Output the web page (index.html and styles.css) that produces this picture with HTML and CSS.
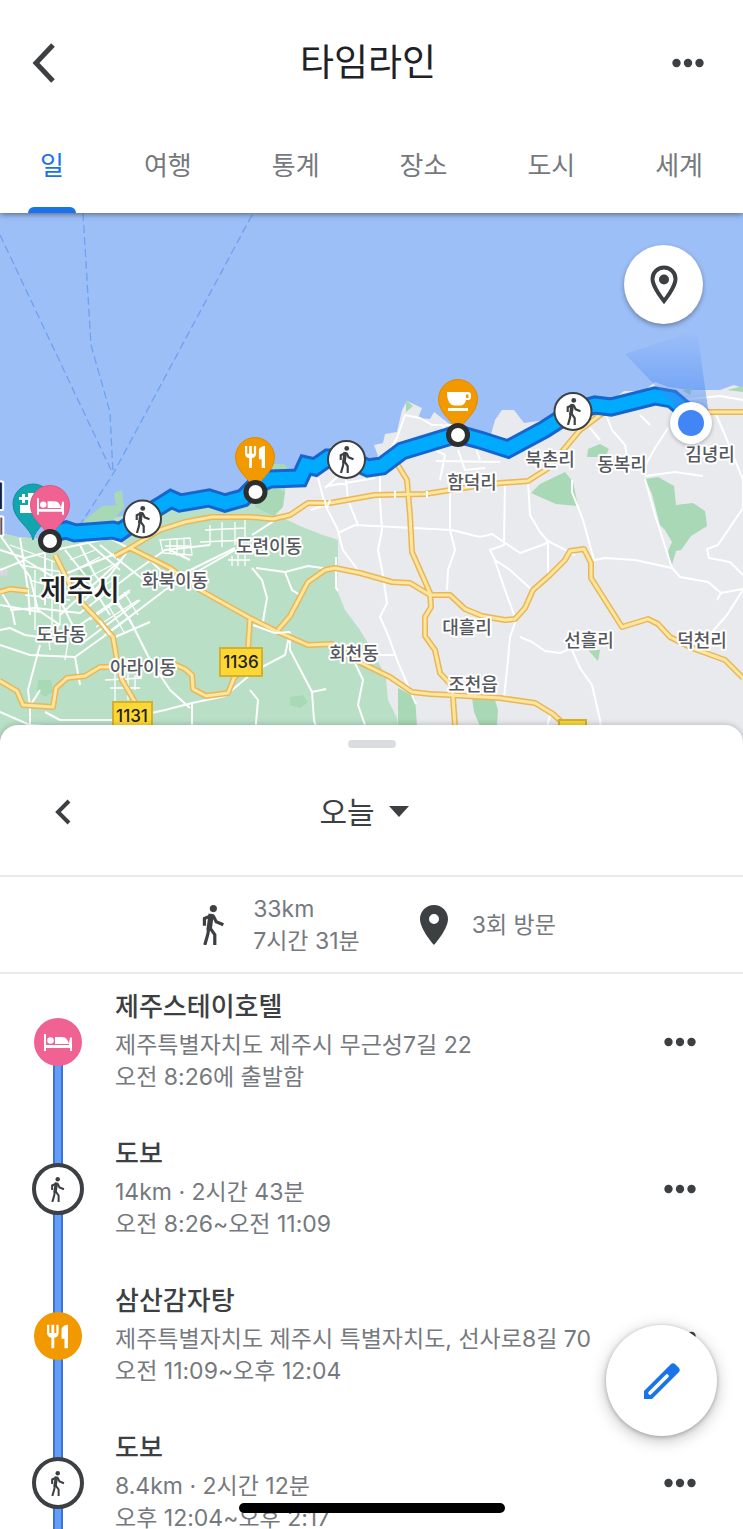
FILE: index.html
```html
<!DOCTYPE html>
<html lang="ko">
<head>
<meta charset="utf-8">
<meta name="viewport" content="width=device-width, initial-scale=1">
<title>타임라인</title>
<link rel="stylesheet" href="styles.css">
</head>
<body>
<svg class="defs" aria-hidden="true">
  <symbol id="walk" viewBox="0 0 62 112"><circle cx="32" cy="10" r="10" stroke="none"/><g fill="none" stroke="#3c4043" stroke-width="9"><path d="M27 29L7 38V58M31 29L40 47L60 55M19 60L17 80L8 112M21 62L36 83V112"/><path stroke-width="15" d="M26 25L20 70"/></g></symbol>
  <symbol id="food" viewBox="3 2 18 20"><path d="M11 9H9.200V2H6.800v7H5V2H3v7c0 2.120 1.660 3.840 3.750 3.970V22h2.500v-9.030C11.340 12.840 13 11.120 13 9V2h-2zM15.500 6v8h2.500v8h3V2c-3 0-5.500 2-5.500 4z"/></symbol>
  <symbol id="bed" viewBox="0 0 28 17"><path d="M0 0h2v11h23V9l1-5.500h2V17h-2v-3H2v3H0zM11 10V3h7c4 0 6 3 7 7z"/><circle cx="6.500" cy="6.500" r="3.300"/></symbol>
  <symbol id="cup" viewBox="0 0 24 19"><path fill-rule="evenodd" d="M0 0h21c2 0 3 1 3 3v2c0 2-1 3-3 3h-2c-1 4-3 5.500-6 5.500H8C3 13.500 0 9 0 0zM19 2.500v3.500h2.500V2.500zM1 16h20v3H1z"/></symbol>
  <symbol id="dots" viewBox="0 0 32 10"><circle cx="4.500" cy="5" r="4.200"/><circle cx="16" cy="5" r="4.200"/><circle cx="27.500" cy="5" r="4.200"/></symbol>
</svg>

<div class="app">
  <header class="topbar">
    <button class="icon-btn" aria-label="뒤로"><svg class="back" viewBox="0 0 24 40"><path d="M21 2L4 20l17 18"/></svg></button>
    <h1 class="title">타임라인</h1>
    <button class="icon-btn icon-btn-end" aria-label="더보기"><svg class="dots"><use href="#dots"/></svg></button>
  </header>
  <nav class="tabs">
    <a class="tab tab-active" href="#day" aria-current="page">일</a>
    <a class="tab" href="#trips">여행</a>
    <a class="tab" href="#stats">통계</a>
    <a class="tab" href="#places">장소</a>
    <a class="tab" href="#cities">도시</a>
    <a class="tab" href="#world">세계</a>
  </nav>

  <section class="map" aria-label="지도">
    <svg class="map-art" viewBox="0 213 743 527" preserveAspectRatio="xMidYMin slice">
      <defs>
        <linearGradient id="beam" x1="0" y1="1" x2="0" y2="0"><stop offset="0" stop-color="#4285f4" stop-opacity=".65"/><stop offset="1" stop-color="#4285f4" stop-opacity="0"/></linearGradient>
        <path id="yellow" d="M115 556L130 548L160 530L185 522L212 517L250 517L273 519L290 515L308 503L330 503L375 495L425 494L470 487L500 483L528 481L547 469L565 448L580 430L604 412M705 412H743M130 548L170 568L200 590L250 618L276 631L308 645L332 644L355 660L390 677L412 692L430 694L450 695L500 698L535 703L553 714L566 726M396 462L407 480L410 515L412 552L430 593L431 607L425 617L425 636L435 650L440 673L453 687L453 697L456 740M278 630L290 616L308 582L325 570L335 568L360 573L392 582L410 583L430 595L450 595L465 609L482 616L505 620L515 619L525 608L533 590L550 575L565 560L570 551L584 549L591 563L591 578L622 627L648 619L658 624L670 637L692 648L725 660L743 678M55 555L70 585L83 604L100 622L113 637L117 660L122 680L135 702M0 681L17 691L23 705L53 707L56 688L67 678L85 676L100 667L115 667M165 660L185 669L192 675L193 689L206 696L228 693L234 678L245 668L248 650L250 618M0 592L10 589L28 591"/>
        <path id="route" d="M50 534L66 530L75 533L113 530L120 532L140 518L160 506L171 499L180 503L209 498L225 503L243 498L256 485L270 479L300 478L306 465L315 467L328 458L346 458L368 468L382 466L402 451L458 434L480 440L508 449L545 429L573 411L595 405L611 407L655 396L672 399L691 415"/>
      </defs>
      <path fill="#9dbff8" d="M0 213h743v527H0z"/>
      <path fill="#e8eaed" d="M0 533L18 537L50 540L84 524L143 512L172 499L210 495L250 490L276 467L300 478L330 463L368 468L378 456L374 445L383 443L385 434L397 432L402 410L407 401L422 408L418 418L430 419L434 412L452 426L490 438L495 420L502 410L514 410L524 423L545 420L573 403L615 398L624 391L644 391L655 382L668 387L690 390L720 390L734 385L743 388V740H0z"/>
      <path fill="#b9e0c6" d="M0 533L18 537L50 540L84 524L143 512L172 499L210 495L250 490L276 467L290 469L283 500L275 514L300 526L320 534L338 540L338 562L337 590L345 610L360 630L376 657L386 678L388 700L397 718L400 740H0z"/>
      <path fill="#a8d8b5" d="M80 524L102 506L116 505L114 493L122 490L124 508L110 523zM255 495L275 487L285 492L283 507L274 516L255 507zM264 474L274 464H284L290 470zM406 400L413 406L406 412zM531 493L540 484L565 472L573 482L578 506L556 504zM645 479L658 477L674 486L676 505L693 503L705 511L707 526L691 536L681 550L676 551L671 568L668 551L672 542L665 530L660 525L652 494zM588 449L600 444L609 449L605 457H587zM588 650L600 650L598 661zM398 688L415 697L418 740H398zM472 697H494L498 710L496 740H486L474 712zM38 680L51 680L53 692L45 697L37 691zM290 697L303 695L308 702L300 708L290 705zM77 567L88 566L92 576H78zM682 390L692 388L690 395zM727 390L743 386V392z"/>
      <path fill="#d5d8dd" d="M0 567L8 570L7 577L0 575z"/>
      <g fill="none" stroke="#70a0f0" stroke-width="1.300" stroke-dasharray="8 4"><path d="M0 235L113 474"/><path d="M83 213L91 345L110 412L113 474"/><path d="M252 215L113 474L80 525"/></g>
      <g class="streets">
        <path d="M0 550L25 558L55 550L110 538L150 560L170 580L235 548M0 570L25 560L55 578L100 560L130 548L110 575L80 605M0 535L30 577L38 610L60 625M10 610L35 608L80 613L130 575L165 550L210 545M0 645L30 655L75 657L110 632L165 590L235 550M80 545L95 575L130 620L150 660L170 690L190 708M40 690L30 706L30 740M30 706L28 690L40 645M75 657L80 685M115 637L150 622M60 615L115 565L122 560M70 632L130 590M80 645L140 600M20 538L28 590L30 615M45 545V605M65 550L85 575L110 615M0 605L40 612M0 630L10 628L25 635L60 640M60 600L80 640M0 712L30 725L75 728L98 738M45 712L60 720L120 720L165 710L192 703L225 696L250 675M192 703V740M85 540L120 570M100 545L150 585M15 625L12 610L0 590"/>
        <path stroke-width="1.300" d="M160 540L190 538L192 555L163 553zM165 546H190M170 539V554M177 538V556M184 538V555M205 530L245 528M200 542L250 540M210 525V545M222 522V547M235 522V545M245 520V540M90 620L130 592M96 627L138 600M104 635L144 606M108 605L124 632M116 598L132 625M124 592L138 615M10 545L55 562M20 565L62 572M30 580L65 590M25 595L70 600M35 570V630M52 560V625M60 565V625M70 560L95 550M75 570L100 557M80 582L112 565M90 595L120 575M50 650L48 632L60 625M65 660L68 642M105 680L142 678M110 688H140M115 670V705M128 670V700M135 675V690M228 560H250M232 556V566M238 555V566M245 555V566"/>
        <path d="M252 535L280 517M252 568L262 580L267 598L264 615L262 628M256 568L285 572L308 566L330 569M285 572L292 590L303 597M336 557V588L338 591M318 478L325 505L337 528L343 550L360 573M325 488L345 470M325 505L311 510M328 486L375 478M346 480L348 500L358 525M380 470V500L382 530L378 550L383 575L387 603L380 617L388 635L397 660L412 695L416 704M338 533L355 525L452 530L480 537L492 534L520 553L545 544L548 541L575 555M450 480V530L455 550L448 570L447 590M505 480L504 545L490 550L495 560L510 570L532 590M493 555L505 590L516 620L510 637L508 660L504 698M572 480V492L583 520L594 560L605 558L635 560L672 568L680 577L708 582L721 593L743 589M721 593L717 600M528 481L530 515L540 532L548 541V573M606 415L612 430L625 445L630 470M590 428L600 440M645 479L655 515L672 568M645 476L675 472L703 476M668 428L655 448L643 470M715 412L725 435L735 460L743 480V508L718 545L707 549L709 558L730 562L743 575M743 590L727 615L712 632M572 648L560 653L545 651L532 642L520 637M572 650L580 668L592 685L600 720L602 740M250 690L258 700L255 735M290 632L285 655L262 667M290 635V650L312 692L314 720L320 740M312 692L326 689M355 663L363 680L358 705L365 725M395 655H380M430 447L445 455L440 480M458 450L465 470L485 468M475 445L480 460M436 461L500 462M405 460L390 450L397 438L405 415L420 418L432 425L455 425M430 450L445 425M640 415L650 425M680 400L720 396L743 400M550 715L545 735"/>
      </g>
      <use href="#yellow" class="road-edge"/>
      <use href="#yellow" class="road-fill"/>
      <path fill="none" stroke="#fff" stroke-width="2" d="M253 625L275 633L290 632M190 560L170 550M100 621L110 635M395 491v7M427 491v7M325 500l1 8M330 500l-3 8"/>
      <g class="place">
        <text x="472" y="489">함덕리</text><text x="550" y="466">북촌리</text><text x="622" y="471">동복리</text><text x="710" y="461">김녕리</text>
        <text x="269" y="553">도련이동</text><text x="175" y="587">화북이동</text><text x="61" y="641">도남동</text><text x="143" y="674">아라이동</text>
        <text x="354" y="660">회천동</text><text x="467" y="634">대흘리</text><text x="473" y="691">조천읍</text><text x="589" y="647">선흘리</text><text x="702" y="647">덕천리</text>
        <text x="-4" y="533">리</text>
      </g>
      <g class="place city"><text x="80" y="601">제주시</text><text x="-8" y="507">시</text></g>
      <g class="shield"><rect x="220" y="648" width="42" height="28"/><text x="241" y="668">1136</text><rect x="113" y="702" width="39" height="28"/><text x="132" y="722">1131</text><rect x="559" y="720" width="27" height="20"/></g>
      <use href="#route" class="route-edge"/>
      <use href="#route" class="route-fill"/>
      <path fill="url(#beam)" d="M691 423L625 354L697 330L710 423z"/>
      <path fill="#12a4af" stroke="#0e929c" d="M33 540C31 527 13 520 13 504a20 20 0 0140 0C53 520 35 527 33 540z"/>
      <path fill="#fff" d="M22 494h3v3h3v3h-3v3h-3v-3h-3v-3h3zM28 493h10v20H20v-8h8z"/>
      <path fill="#f06292" stroke="#e05584" d="M50 540C48 528 30.500 521 30.500 505a19.500 19.500 0 0139 0C69.500 521 52 528 50 540z"/>
      <use href="#bed" x="37" y="498" width="27" height="17" fill="#fff"/>
      <path id="pin" fill="#f29900" stroke="#df8b00" d="M255 492C253 480 235.500 473 235.500 457a19.500 19.500 0 0139 0C274.500 473 257 480 255 492z"/>
      <use href="#food" x="245" y="445" width="20" height="24" fill="#fff"/>
      <use href="#pin" x="203" y="-58"/>
      <use href="#cup" x="447" y="392" width="24" height="19" fill="#fff"/>
      <g class="stop"><circle cx="50" cy="541" r="9.500"/><circle cx="255.500" cy="492" r="9.500"/><circle cx="458" cy="435" r="9.500"/></g>
      <g class="leg"><circle cx="142.500" cy="519" r="18.500"/><circle cx="346.500" cy="459.500" r="18.500"/><circle cx="573" cy="411.500" r="18.500"/></g>
      <g fill="#3c4043"><use href="#walk" x="134" y="506" width="17" height="27"/><use href="#walk" x="338" y="446" width="17" height="27"/><use href="#walk" x="565" y="398" width="17" height="27"/></g>
      <circle class="here" cx="691" cy="423" r="21"/><circle cx="691" cy="423" r="13" fill="#4285f4"/>
    </svg>
    <button class="locate" aria-label="내 위치"><svg viewBox="0 0 28 40"><path d="M14 2.500C7.500 2.500 2.500 7.500 2.500 14c0 8 11.500 22 11.500 22s11.500-14 11.500-22c0-6.500-5-11.500-11.500-11.500z"/><circle cx="14" cy="14.500" r="5"/></svg></button>
  </section>

  <main class="sheet">
    <div class="handle"></div>
    <div class="day-nav">
      <button class="icon-btn" aria-label="이전 날짜"><svg class="prev" viewBox="0 0 16 26"><path d="M14 2L3 13l11 11"/></svg></button>
      <button class="today">오늘<svg class="caret" viewBox="0 0 20 11"><path d="M0 0h20L10 11z"/></svg></button>
    </div>
    <div class="summary">
      <svg class="sum-walk"><use href="#walk"/></svg>
      <p class="sum-text">33km<br>7시간 31분</p>
      <svg class="sum-pin" viewBox="5 2 14 20"><path fill-rule="evenodd" d="M12 2C8.130 2 5 5.130 5 9c0 5.250 7 13 7 13s7-7.750 7-13c0-3.870-3.130-7-7-7zm0 9.500a2.500 2.500 0 110-5 2.500 2.500 0 010 5z"/></svg>
      <p class="sum-text">3회 방문</p>
    </div>
    <ul class="timeline">
      <li class="entry">
        <div class="marker"><span class="badge badge-hotel"><svg class="i-bed"><use href="#bed"/></svg></span></div>
        <div class="info"><h2 class="name">제주스테이호텔</h2><p>제주특별자치도 제주시 무근성7길 22</p><p>오전 8:26에 출발함</p></div>
        <button class="more" aria-label="더보기"><svg class="dots"><use href="#dots"/></svg></button>
      </li>
      <li class="entry">
        <div class="marker"><span class="badge badge-walk"><svg class="i-walk"><use href="#walk"/></svg></span></div>
        <div class="info"><h2 class="name">도보</h2><p>14km · 2시간 43분</p><p>오전 8:26~오전 11:09</p></div>
        <button class="more" aria-label="더보기"><svg class="dots"><use href="#dots"/></svg></button>
      </li>
      <li class="entry">
        <div class="marker"><span class="badge badge-food"><svg class="i-food"><use href="#food"/></svg></span></div>
        <div class="info"><h2 class="name">삼산감자탕</h2><p>제주특별자치도 제주시 특별자치도, 선사로8길 70</p><p>오전 11:09~오후 12:04</p></div>
        <button class="more" aria-label="더보기"><svg class="dots"><use href="#dots"/></svg></button>
      </li>
      <li class="entry">
        <div class="marker"><span class="badge badge-walk"><svg class="i-walk"><use href="#walk"/></svg></span></div>
        <div class="info"><h2 class="name">도보</h2><p>8.4km · 2시간 12분</p><p>오후 12:04~오후 2:17</p></div>
        <button class="more" aria-label="더보기"><svg class="dots"><use href="#dots"/></svg></button>
      </li>
    </ul>
  </main>
  <button class="fab" aria-label="수정"><svg viewBox="0 0 36 36"><path fill="#1a73e8" d="M0 36v-8L26.500 1.500q2.500-2.500 5 0l3 3q2.500 2.500 0 5L8 36z"/><path fill="none" stroke="#fff" stroke-width="3.600" stroke-linecap="round" d="M6 30L23 13"/></svg></button>
  <div class="home-bar"></div>
</div>
</body>
</html>
```
FILE: styles.css
```css
* { box-sizing: border-box; }
body {
  margin: 0;
  background: #fff;
  color: #3c4043;
  font-family: Inter, "Noto Sans CJK KR", sans-serif;
}
h1, h2, p, ul { margin: 0; padding: 0; font-weight: 400; list-style: none; }
button { border: 0; padding: 0; background: none; color: inherit; font: inherit; cursor: pointer; }
svg { display: block; fill: #3c4043; }
.defs { position: absolute; width: 0; height: 0; }
.app {
  position: relative;
  display: flex;
  flex-direction: column;
  height: 100vh;
  overflow: hidden;
}

.topbar {
  position: relative;
  z-index: 2;
  display: grid;
  grid-template-columns: 1fr auto 1fr;
  align-items: center;
  height: 125px;
  padding: 0 39px 0 32px;
  flex: none;
  background: #fff;
}
.icon-btn { justify-self: start; }
.icon-btn-end { justify-self: end; }
.title { color: #202124; font-size: 37px; line-height: 48px; }
.back { width: 24px; height: 40px; fill: none; stroke: #3c4043; stroke-width: 5; }
.prev { width: 16px; height: 26px; fill: none; stroke: #3c4043; stroke-width: 4; }
.dots { width: 32px; height: 10px; }

.tabs {
  position: relative;
  z-index: 1;
  display: flex;
  flex: none;
  height: 88px;
  background: #fff;
  box-shadow: 0 1px 6px rgba(0, 0, 0, .5);
}
.tab {
  position: relative;
  flex: 1 1 auto;
  padding: 0 39px;
  color: #75797e;
  font-size: 26px;
  line-height: 82px;
  text-align: center;
  text-decoration: none;
  white-space: nowrap;
}
.tab-active { color: #1a73e8; }
.tab-active::after {
  content: "";
  position: absolute;
  right: 28px;
  bottom: 0;
  left: 28px;
  height: 6px;
  border-radius: 6px 6px 0 0;
  background: #1a73e8;
}

.map { position: relative; flex: none; }
.map-art { width: 100%; height: auto; }
.streets { fill: none; stroke: #fff; stroke-width: 2; stroke-linejoin: round; }
.road-edge, .road-fill { fill: none; stroke: #e9b659; stroke-width: 6; stroke-linejoin: round; }
.road-fill { stroke: #fee69c; stroke-width: 3; }
.route-edge, .route-fill { fill: none; stroke: #1765cc; stroke-width: 19; stroke-linejoin: miter; }
.route-fill { stroke: #00aaff; stroke-width: 13; }
.place {
  fill: #55595e;
  stroke: #fff;
  stroke-width: 4px;
  stroke-linejoin: round;
  paint-order: stroke;
  font-size: 18px;
  font-weight: 500;
  text-anchor: middle;
}
.city { fill: #202124; font-size: 29px; }
.shield rect { fill: #fdd835; stroke: #d5b02c; stroke-width: 2px; }
.shield text { fill: #202124; font-size: 17px; font-weight: 500; text-anchor: middle; }
.stop { fill: #fff; stroke: #2d2e30; stroke-width: 5px; }
.leg { fill: #fff; stroke: #3c4043; stroke-width: 2px; }
.here { fill: #fff; filter: drop-shadow(0 1px 2px rgba(0, 0, 0, .3)); }
.locate {
  position: absolute;
  top: 32px;
  right: 40px;
  display: grid;
  place-items: center;
  width: 79px;
  height: 79px;
  border-radius: 50%;
  background: #fff;
  box-shadow: 0 2px 5px rgba(0, 0, 0, .35);
}
.locate svg { width: 28px; height: 40px; }
.locate path { fill: none; stroke: #3c4043; stroke-width: 4; }

.sheet {
  position: relative;
  flex: 1 1 0;
  min-height: 0;
  margin-top: -15px;
  padding-top: 15px;
  overflow: hidden;
  border-radius: 18px 18px 0 0;
  background: #fff;
  box-shadow: 0 0 6px rgba(0, 0, 0, .25);
}
.handle { width: 48px; height: 8px; margin: 0 auto; border-radius: 4px; background: #dadce0; }
.day-nav {
  display: grid;
  grid-template-columns: 1fr auto 1fr;
  align-items: center;
  height: 129px;
  padding: 0 70px 0 55px;
  border-bottom: 2px solid #e8eaed;
}
.today { display: flex; align-items: center; gap: 14px; font-size: 30px; line-height: 40px; }
.caret { width: 20px; height: 11px; }
.summary {
  display: flex;
  align-items: center;
  justify-content: center;
  height: 97px;
  padding-left: 14px;
  border-bottom: 2px solid #e8eaed;
}
.sum-walk { width: 24px; height: 40px; margin-right: 28px; }
.sum-pin { width: 28px; height: 40px; margin: 0 24px 0 60px; }
.sum-text, .info { color: #75797e; font-size: 23px; line-height: 32px; }

.entry { display: grid; grid-template-columns: 115px 1fr auto; height: 147px; }
.marker {
  padding-top: 42px;
  background: linear-gradient(to right, #3874dc 2px, #669df6 2px 8px, #3874dc 8px) center bottom / 10px 100% no-repeat;
}
.entry:first-child .marker { background-size: 10px 50%; }
.badge {
  display: grid;
  place-items: center;
  width: 52px;
  height: 52px;
  margin: 0 auto;
  border-radius: 50%;
}
.badge-hotel, .badge-food { width: 48px; height: 48px; margin-top: 2px; }
.badge-hotel { background: #f06292; }
.badge-food { background: #f29900; }
.badge-hotel svg, .badge-food svg { fill: #fff; }
.badge-walk { border: 4px solid #3c4043; background: #fff; }
.i-bed { width: 28px; height: 17px; }
.i-walk { width: 15px; height: 25px; }
.i-food { width: 21px; height: 25px; }
.info { padding-top: 11px; white-space: nowrap; }
.name { color: #3c4043; font-size: 26px; line-height: 44px; font-weight: 500; }
.more { align-self: start; height: 32px; margin: 52px 47px 0 0; }

.fab {
  position: absolute;
  right: 26px;
  bottom: 93px;
  display: grid;
  place-items: center;
  width: 111px;
  height: 111px;
  border-radius: 50%;
  background: #fff;
  box-shadow: 0 4px 16px rgba(0, 0, 0, .25), 0 1px 4px rgba(0, 0, 0, .25);
}
.fab svg { width: 36px; height: 36px; }
.home-bar {
  position: absolute;
  bottom: 16px;
  left: 50%;
  width: 266px;
  height: 10px;
  margin-left: -133px;
  border-radius: 5px;
  background: #000;
}
```
